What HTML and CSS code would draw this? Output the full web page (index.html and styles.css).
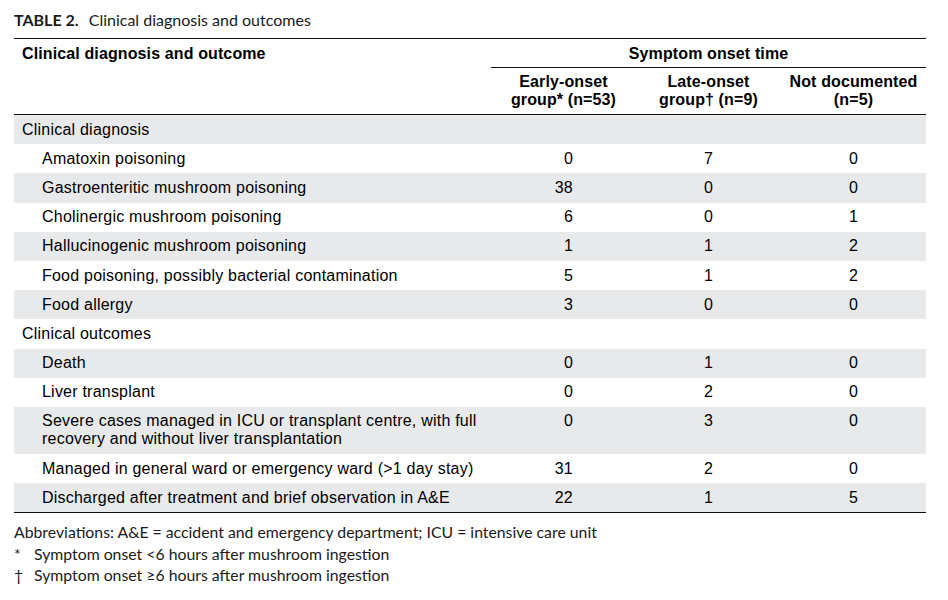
FILE: index.html
```html
<!DOCTYPE html>
<html lang="en">
<head>
<meta charset="utf-8">
<title>Table 2</title>
<link rel="stylesheet" href="styles.css">
</head>
<body>
<div class="page">
  <p class="caption"><span class="caption-label">TABLE 2.</span> Clinical diagnosis and outcomes</p>
  <table class="data">
    <colgroup>
      <col class="col-label">
      <col class="col-num">
      <col class="col-num">
      <col class="col-num">
    </colgroup>
    <thead>
      <tr>
        <th class="h-label" rowspan="2">Clinical diagnosis and outcome</th>
        <th class="h-group" colspan="3">Symptom onset time</th>
      </tr>
      <tr class="h-sub">
        <th>Early-onset<br>group* (n=53)</th>
        <th>Late-onset<br>group† (n=9)</th>
        <th>Not documented<br>(n=5)</th>
      </tr>
    </thead>
    <tbody>
      <tr class="cat"><td>Clinical diagnosis</td><td></td><td></td><td></td></tr>
      <tr><td class="item">Amatoxin poisoning</td><td class="n1">0</td><td class="n">7</td><td class="n">0</td></tr>
      <tr><td class="item">Gastroenteritic mushroom poisoning</td><td class="n1">38</td><td class="n">0</td><td class="n">0</td></tr>
      <tr><td class="item">Cholinergic mushroom poisoning</td><td class="n1">6</td><td class="n">0</td><td class="n">1</td></tr>
      <tr><td class="item">Hallucinogenic mushroom poisoning</td><td class="n1">1</td><td class="n">1</td><td class="n">2</td></tr>
      <tr><td class="item">Food poisoning, possibly bacterial contamination</td><td class="n1">5</td><td class="n">1</td><td class="n">2</td></tr>
      <tr><td class="item">Food allergy</td><td class="n1">3</td><td class="n">0</td><td class="n">0</td></tr>
      <tr class="cat"><td>Clinical outcomes</td><td></td><td></td><td></td></tr>
      <tr><td class="item">Death</td><td class="n1">0</td><td class="n">1</td><td class="n">0</td></tr>
      <tr><td class="item">Liver transplant</td><td class="n1">0</td><td class="n">2</td><td class="n">0</td></tr>
      <tr><td class="item">Severe cases managed in ICU or transplant centre, with full<br>recovery and without liver transplantation</td><td class="n1">0</td><td class="n">3</td><td class="n">0</td></tr>
      <tr><td class="item">Managed in general ward or emergency ward (&gt;1 day stay)</td><td class="n1">31</td><td class="n">2</td><td class="n">0</td></tr>
      <tr><td class="item">Discharged after treatment and brief observation in A&amp;E</td><td class="n1">22</td><td class="n">1</td><td class="n">5</td></tr>
    </tbody>
  </table>
  <div class="notes">
    <p class="note">Abbreviations: A&amp;E = accident and emergency department; ICU = intensive care unit</p>
    <p class="note fn"><span class="mark">*</span><span>Symptom onset &lt;6 hours after mushroom ingestion</span></p>
    <p class="note fn"><span class="mark">†</span><span>Symptom onset ≥6 hours after mushroom ingestion</span></p>
  </div>
</div>
</body>
</html>
```

FILE: styles.css
```css
html, body {
  margin: 0;
  padding: 0;
  background: #ffffff;
}

.page {
  width: 912px;
  padding: 10px 0 0 14px;
  color: #111;
}

.caption {
  margin: 0 0 8px 0;
  font-family: Lato, "Open Sans", sans-serif;
  font-size: 16px;
  line-height: 20px;
  color: #1a1a1a;
}

.caption-label {
  font-weight: 700;
  margin-right: 6px;
}

.data {
  width: 912px;
  border-collapse: collapse;
  table-layout: fixed;
  font-family: "Liberation Sans", Arial, sans-serif;
  font-size: 16px;
  line-height: 18px;
  letter-spacing: 0.22px;
  color: #000;
  border-top: 1px solid #111;
  border-bottom: 1px solid #111;
}

.col-label { width: 477px; }
.col-num { width: 145px; }

.data th {
  font-weight: 700;
  padding: 5px 0;
  letter-spacing: 0.12px;
}

.h-label {
  text-align: left;
  vertical-align: top;
  padding-left: 8px !important;
  padding-top: 6px !important;
  border-bottom: 1px solid #111;
}

.h-group {
  text-align: center;
  padding-top: 6px !important;
  padding-bottom: 4px !important;
  border-bottom: 1px solid #111;
}

.h-sub th {
  text-align: center;
  border-bottom: 1px solid #111;
}

.data td {
  padding: 5.6px 0;
  vertical-align: top;
}

.data tbody tr:nth-child(odd) td {
  background: #e8e9eb;
}

.cat td:first-child {
  padding-left: 8px;
}

.item {
  padding-left: 28px !important;
}

.n1 {
  text-align: right;
  padding-right: 63px !important;
}

.n {
  text-align: right;
  padding-right: 68px !important;
}

.notes {
  margin-top: 8px;
  font-family: Lato, "Open Sans", sans-serif;
  font-size: 15.8px;
  line-height: 21.5px;
  color: #1a1a1a;
}

.note {
  margin: 0;
}

.fn {
  display: flex;
}

.mark {
  width: 20px;
  flex: none;
}
```
